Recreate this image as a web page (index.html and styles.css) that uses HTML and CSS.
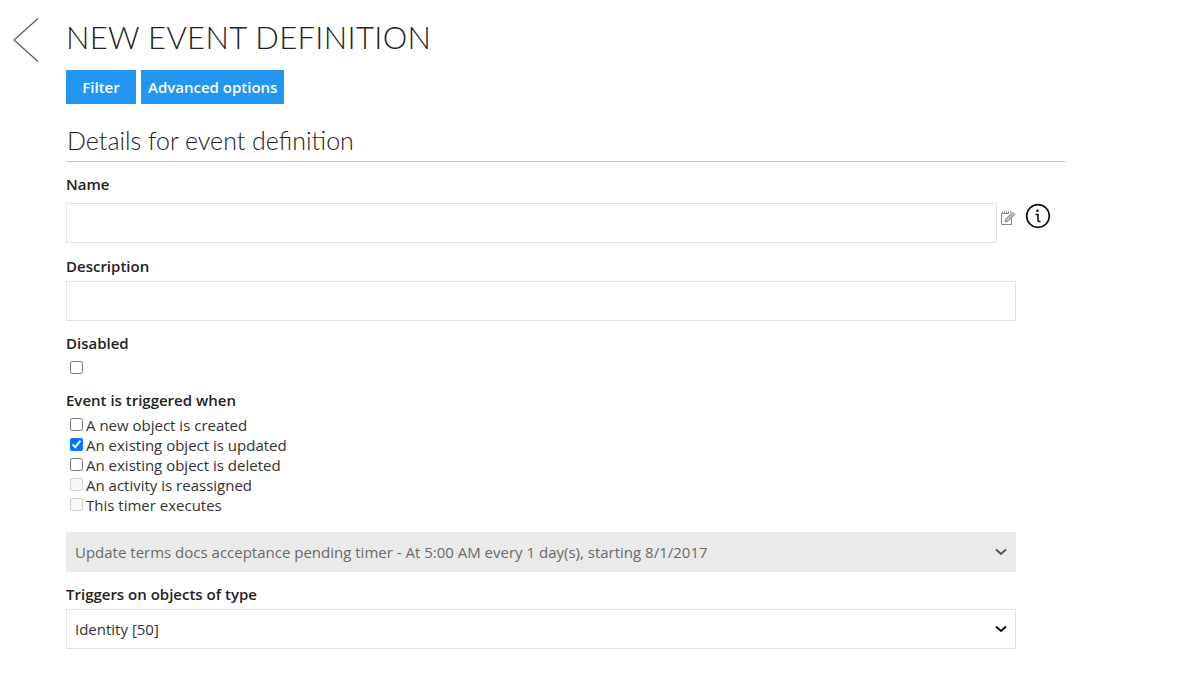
FILE: index.html
```html
<!DOCTYPE html>
<html lang="en">
<head>
<meta charset="utf-8">
<title>New event definition</title>
<link rel="stylesheet" href="styles.css">
</head>
<body>
<div class="page">
  <a class="back" aria-label="Back">
    <svg width="26" height="44" viewBox="0 0 26 44"><path d="M25 0.5 L1 22 L25 43.5" fill="none" stroke="#555" stroke-width="1.2"/></svg>
  </a>
  <main class="main">
    <h1 class="title">NEW EVENT DEFINITION</h1>
    <div class="actions">
      <button class="btn btn-filter">Filter</button>
      <button class="btn">Advanced options</button>
    </div>
    <h2 class="section">Details for event definition</h2>
    <form class="form">
      <label class="label label-name">Name</label>
      <div class="name-row">
        <input class="input input-name" type="text">
        <svg class="edit" width="16" height="16" viewBox="0 0 16 16"><path d="M9 3.500H1.500V14.500H11.500V8" fill="none" stroke="#888" stroke-width="1"/><path d="M2.500 1.500V3.500M4.500 1.500V3.500M6.500 1.500V3.500M8.500 1.500V3.500M10.500 1.500V3" stroke="#888" stroke-width="1"/><path d="M5 12L5.700 9L12.500 2.200L14.800 4.500L8 11.300Z" fill="#bbb" stroke="#777" stroke-width=".8"/></svg>
        <svg class="info" width="26" height="26" viewBox="0 0 26 26"><circle cx="13" cy="13" r="11.300" fill="none" stroke="#111" stroke-width="1.700"/><circle cx="12.500" cy="7.800" r="1.300" fill="#111"/><path d="M10.500 11.500H13V17.500C13 18.500 14 18.700 15.500 18.200" fill="none" stroke="#111" stroke-width="1.600"/></svg>
      </div>
      <label class="label label-desc">Description</label>
      <input class="input input-full" type="text">
      <label class="label label-disabled">Disabled</label>
      <div class="check-single"><input type="checkbox" class="check"></div>
      <label class="label label-event">Event is triggered when</label>
      <div class="checks">
        <label class="check-row"><input type="checkbox" class="check">A new object is created</label>
        <label class="check-row"><input type="checkbox" class="check" checked>An existing object is updated</label>
        <label class="check-row"><input type="checkbox" class="check">An existing object is deleted</label>
        <label class="check-row"><input type="checkbox" class="check" disabled>An activity is reassigned</label>
        <label class="check-row"><input type="checkbox" class="check" disabled>This timer executes</label>
      </div>
      <select class="select select-disabled" disabled>
        <option>Update terms docs acceptance pending timer - At 5:00 AM every 1 day(s), starting 8/1/2017</option>
      </select>
      <label class="label label-type">Triggers on objects of type</label>
      <select class="select">
        <option>Identity [50]</option>
      </select>
    </form>
  </main>
</div>
</body>
</html>
```
FILE: styles.css
```css
* { box-sizing: border-box; }
html, body { margin: 0; padding: 0; background: #fff; }
body {
  font-family: "Open Sans", sans-serif;
  font-size: 15px;
  color: #333;
  height: 689px;
  overflow: hidden;
}
.page { display: flex; align-items: flex-start; }
.back { display: block; width: 66px; padding: 18px 0 0 13px; height: 63px; }
.back svg { display: block; }
.main { width: 1000px; }
.title {
  margin: 19px 0 0;
  font-family: "Lato", sans-serif;
  font-weight: 300;
  font-size: 31px;
  line-height: 36px;
  letter-spacing: 0.350px;
  color: #222;
  white-space: nowrap;
}
.actions { display: flex; gap: 5px; margin-top: 15px; }
.btn {
  height: 34px;
  border: 0;
  border-radius: 0;
  padding: 0 7px;
  background: #2196f3;
  color: #fff;
  font-family: "Open Sans", sans-serif;
  font-weight: 600;
  font-size: 15px;
}
.btn-filter { width: 70px; padding: 0; }
.section {
  margin: 22px 0 0;
  padding: 0 0 7px 1px;
  border-bottom: 1px solid #c8c8c8;
  font-family: "Lato", sans-serif;
  font-weight: 300;
  font-size: 25px;
  line-height: 28px;
  color: #222;
  box-sizing: content-box;
  height: 28px;
}
.form { display: flex; flex-direction: column; align-items: flex-start; }
.label {
  display: block;
  font-weight: 600;
  font-size: 15px;
  line-height: 20px;
  color: #222;
}
.label-name { margin-top: 12px; }
.label-desc { margin-top: 13px; }
.label-disabled { margin-top: 12px; }
.label-event { margin-top: 13px; }
.label-type { margin-top: 12px; }
.name-row { display: flex; align-items: flex-start; margin-top: 9px; }
.input {
  display: block;
  height: 40px;
  border: 1px solid #e2e2e2;
  background: #fff;
  border-radius: 0;
  outline: 0;
}
.input-name { width: 931px; }
.input-full { width: 950px; margin-top: 5px; }
.edit { margin: 7px 0 0 3px; }
.info { margin: 0 0 0 9px; }
.check-single { display: flex; height: 19px; margin-top: 5px; }
.check { width: 13px; height: 13px; margin: 3px 3px 3px 4px; flex: none; }
.checks { display: flex; flex-direction: column; margin-top: 5px; }
.check-row {
  display: flex;
  align-items: flex-start;
  height: 20px;
  font-size: 15px;
  line-height: 20px;
  color: #333;
}
.check-row .check { margin-bottom: 0; }
.select {
  display: block;
  width: 950px;
  height: 40px;
  margin-top: 5px;
  padding: 0 30px 0 8px;
  border: 1px solid #e2e2e2;
  border-radius: 0;
  appearance: none;
  -webkit-appearance: none;
  outline: 0;
  background-color: #fff;
  background-image: url("data:image/svg+xml,%3Csvg xmlns='http://www.w3.org/2000/svg' width='12' height='8' viewBox='0 0 12 8'%3E%3Cpath d='M1 1.500L6 6L11 1.500' fill='none' stroke='%23111' stroke-width='2'/%3E%3C/svg%3E");
  background-repeat: no-repeat;
  background-position: right 8px center;
  font-family: "Open Sans", sans-serif;
  font-size: 15px;
  color: #333;
}
.select-disabled {
  margin-top: 17px;
  background-color: #eaeaea;
  border-color: #eaeaea;
  color: #6b6b6b;
  opacity: 1;
  background-image: url("data:image/svg+xml,%3Csvg xmlns='http://www.w3.org/2000/svg' width='12' height='8' viewBox='0 0 12 8'%3E%3Cpath d='M1 1.500L6 6L11 1.500' fill='none' stroke='%23555' stroke-width='2'/%3E%3C/svg%3E");
}
```
